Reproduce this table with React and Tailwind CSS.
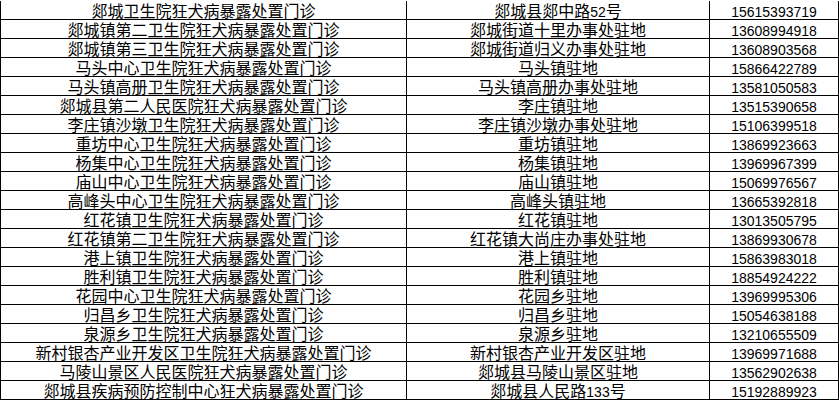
import React from 'react';

const rows = [
  ['郯城卫生院狂犬病暴露处置门诊', '郯城县郯中路52号', '15615393719'],
  ['郯城镇第二卫生院狂犬病暴露处置门诊', '郯城街道十里办事处驻地', '13608994918'],
  ['郯城镇第三卫生院狂犬病暴露处置门诊', '郯城街道归义办事处驻地', '13608903568'],
  ['马头中心卫生院狂犬病暴露处置门诊', '马头镇驻地', '15866422789'],
  ['马头镇高册卫生院狂犬病暴露处置门诊', '马头镇高册办事处驻地', '13581050583'],
  ['郯城县第二人民医院狂犬病暴露处置门诊', '李庄镇驻地', '13515390658'],
  ['李庄镇沙墩卫生院狂犬病暴露处置门诊', '李庄镇沙墩办事处驻地', '15106399518'],
  ['重坊中心卫生院狂犬病暴露处置门诊', '重坊镇驻地', '13869923663'],
  ['杨集中心卫生院狂犬病暴露处置门诊', '杨集镇驻地', '13969967399'],
  ['庙山中心卫生院狂犬病暴露处置门诊', '庙山镇驻地', '15069976567'],
  ['高峰头中心卫生院狂犬病暴露处置门诊', '高峰头镇驻地', '13665392818'],
  ['红花镇卫生院狂犬病暴露处置门诊', '红花镇驻地', '13013505795'],
  ['红花镇第二卫生院狂犬病暴露处置门诊', '红花镇大尚庄办事处驻地', '13869930678'],
  ['港上镇卫生院狂犬病暴露处置门诊', '港上镇驻地', '15863983018'],
  ['胜利镇卫生院狂犬病暴露处置门诊', '胜利镇驻地', '18854924222'],
  ['花园中心卫生院狂犬病暴露处置门诊', '花园乡驻地', '13969995306'],
  ['归昌乡卫生院狂犬病暴露处置门诊', '归昌乡驻地', '15054638188'],
  ['泉源乡卫生院狂犬病暴露处置门诊', '泉源乡驻地', '13210655509'],
  ['新村银杏产业开发区卫生院狂犬病暴露处置门诊', '新村银杏产业开发区驻地', '13969971688'],
  ['马陵山景区人民医院狂犬病暴露处置门诊', '郯城县马陵山景区驻地', '13562902638'],
  ['郯城县疾病预防控制中心狂犬病暴露处置门诊', '郯城县人民路133号', '15192889923'],
];

// digits in the picture are half-width, so they get the narrower latin font size
function Mixed({ text }) {
  const parts = text.split(/(\d+)/);
  return parts.map((p, i) =>
    /^\d+$/.test(p) ? (
      <span key={i} className="text-[14px]">{p}</span>
    ) : (
      <span key={i}>{p}</span>
    )
  );
}

export default function App() {
  return (
    <div
      className="w-[839px] h-[400px] bg-white text-black pt-px overflow-hidden"
      style={{ fontFamily: '"Liberation Sans", "Noto Sans CJK SC", sans-serif' }}
    >
      <div className="border-l border-black">
        {rows.map(([name, place, phone]) => (
          <div key={phone} className="grid grid-cols-[406px_303px_129px] h-[19px] border-b border-black text-[16px] leading-[18px]">
            <div className="border-r border-black flex items-center justify-center pt-[2px] whitespace-nowrap">
              {name}
            </div>
            <div className="border-r border-black flex items-center justify-center pt-[2px] whitespace-nowrap">
              <Mixed text={place} />
            </div>
            <div className="border-r border-black flex items-center justify-center pt-[2px] text-[14px] whitespace-nowrap">
              {phone}
            </div>
          </div>
        ))}
      </div>
    </div>
  );
}
